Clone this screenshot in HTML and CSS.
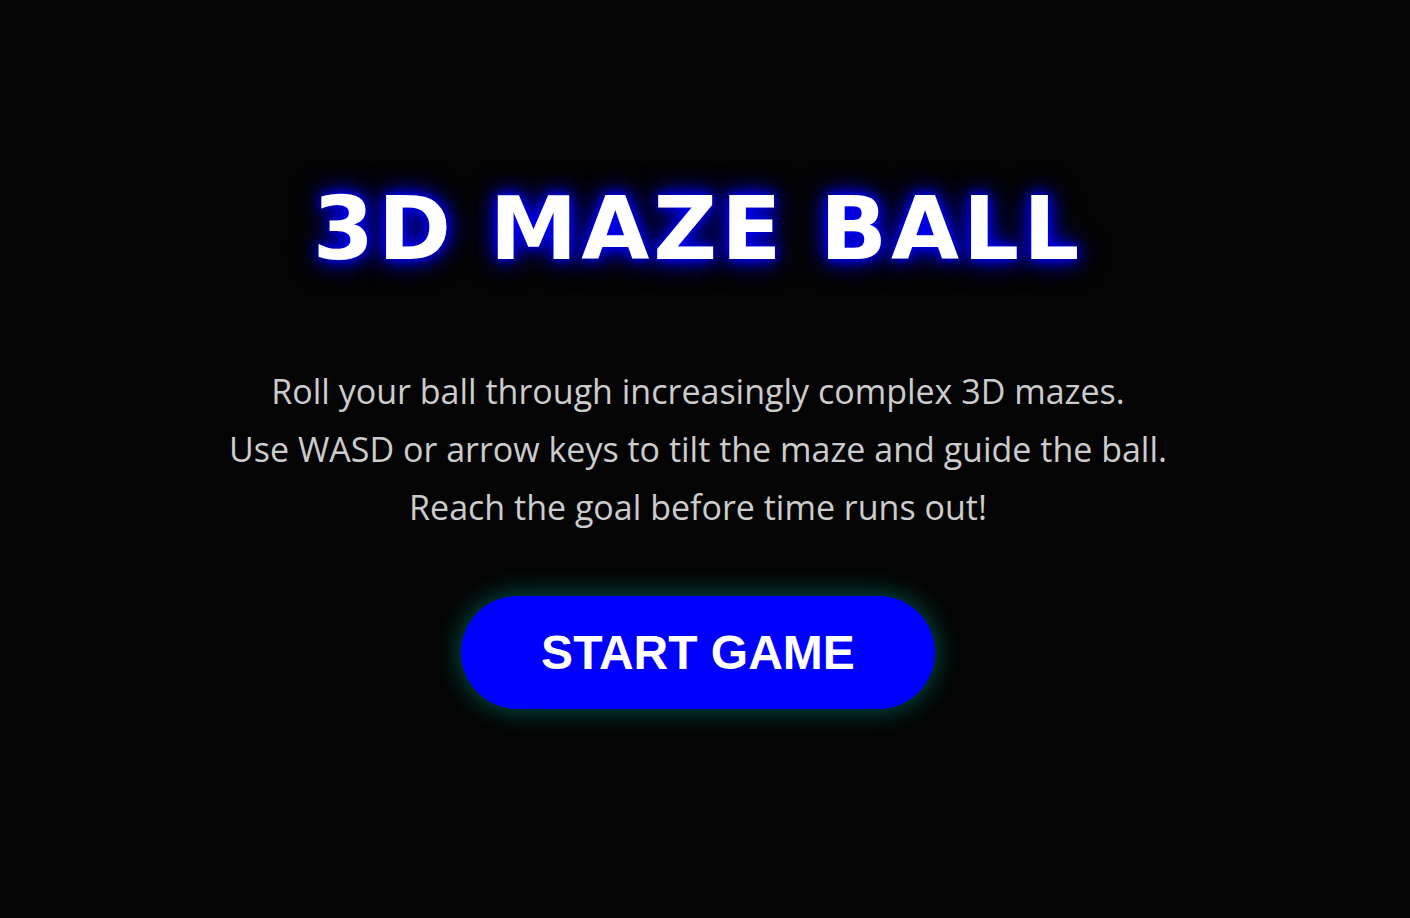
FILE: index.html
```html
<!DOCTYPE html>
<html>
<head>
<meta charset="utf-8">
<link rel="stylesheet" href="styles.css">
</head>
<body>
<main class="screen">
  <h1 class="title">3D MAZE BALL</h1>
  <p class="intro">Roll your ball through increasingly complex 3D mazes.<br>Use WASD or arrow keys to tilt the maze and guide the ball.<br>Reach the goal before time runs out!</p>
  <button class="start">START GAME</button>
</main>
</body>
</html>
```
FILE: styles.css
```css
html, body {
  margin: 0;
  padding: 0;
  height: 100%;
  background: #040404;
}
.screen {
  box-sizing: border-box;
  height: 100%;
  padding: 176px 14px 0 0;
  display: flex;
  flex-direction: column;
  align-items: center;
  font-family: "Open Sans", "Noto Sans", sans-serif;
}
.title {
  margin: 0 0 80px;
  font-family: "DejaVu Sans", sans-serif;
  font-weight: bold;
  font-size: 88px;
  letter-spacing: 4px;
  line-height: 1.2;
  color: #fff;
  text-shadow: 0 0 10px #0000ff, 0 0 20px #0000ff, 0 0 30px #0000aa;
}
.intro {
  margin: 0 0 60px;
  text-align: center;
  color: #cccccc;
  font-size: 34px;
  line-height: 58px;
}
.start {
  border: none;
  background: #0000ff;
  color: #fff;
  font-family: "Liberation Sans", Arial, sans-serif;
  font-weight: bold;
  font-size: 48px;
  line-height: 55px;
  padding: 29px 80px;
  border-radius: 57px;
  box-shadow: 0 0 28px rgba(0, 210, 190, 0.42);
}
```
